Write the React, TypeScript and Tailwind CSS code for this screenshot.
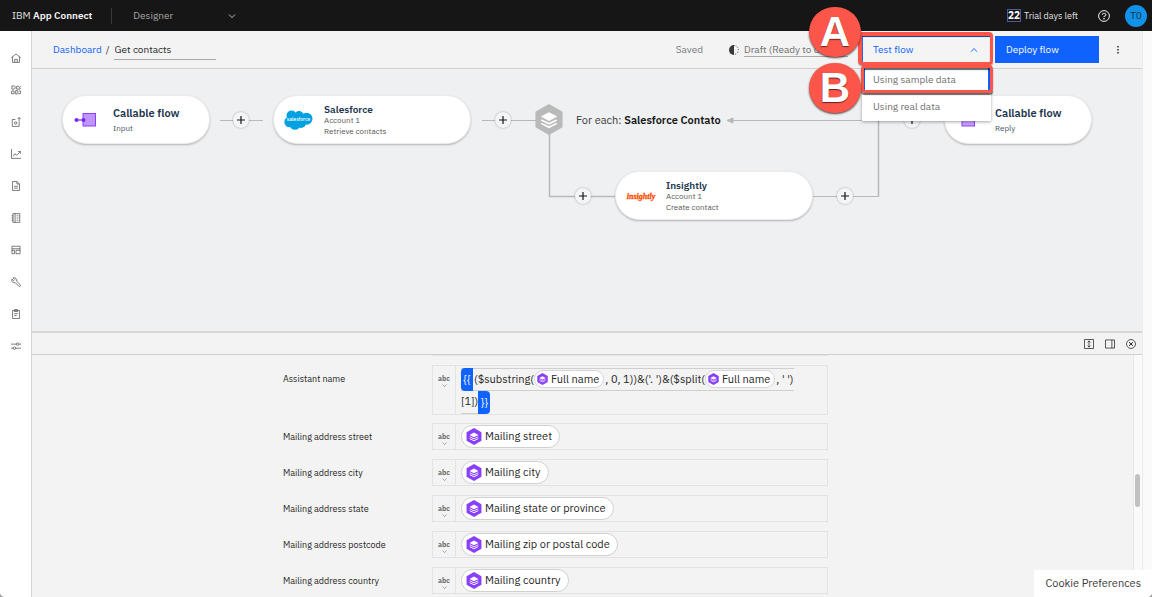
import type { ReactNode } from "react";

const sans = "font-['IBM_Plex_Sans','Roboto','Liberation_Sans',sans-serif]";

function Glyph({ size = 10, children, className = "" }: { size?: number; children: ReactNode; className?: string }) {
  return (
    <svg
      width={size}
      height={size}
      viewBox="0 0 16 16"
      fill="none"
      stroke="currentColor"
      strokeWidth="1.2"
      className={className}
      aria-hidden="true"
    >
      {children}
    </svg>
  );
}

function Chevron({ up = false, size = 8 }: { up?: boolean; size?: number }) {
  return (
    <Glyph size={size}>
      <path d={up ? "M2 11.5 8 5l6 6.5" : "M2 5l6 6.5L14 5"} strokeWidth="1.8" />
    </Glyph>
  );
}

const navItems: { label: string; icon: ReactNode }[] = [
  { label: "Home", icon: <path d="M.5 7.500 8 1.500l7.500 6M2.500 6v9h11V6M6 15v-5h4v5" /> },
  {
    label: "Catalog",
    icon: (
      <path d="M1.500 1.500h4l1 1v3l-1 1h-4zM9 2h3l1.500 2L15.500 2M9 2v4.500h5.500V4M1 9.500h4V14H1zM7.500 9h3.500v3l-1.500 2.500h-2zM13 9.500h2V14h-3.500" />
    ),
  },
  {
    label: "Deploy",
    icon: (
      <>
        <path d="M7 4H2v11h11V7.500M13 7V.8M10.500 3.300 13 .8l2.500 2.500" />
        <circle cx="7.500" cy="9.500" r="2" />
      </>
    ),
  },
  { label: "Metrics", icon: <path d="M.8 0v15H16M3.500 11.500 6 7.500l3 2.500L15 4M11.500 4H15v3.500" /> },
  { label: "Documents", icon: <path d="M2.500.8h7l4 4v10.400h-11zM9.500.8v4h4M5 8.500h6M5 11.500h6" /> },
  { label: "Logs", icon: <path d="M3 1h11v14H3zM6.500 1v14M1 4.500h3M1 8h3M1 11.500h3M9 4.500h3M9 8h3M9 11.500h3" /> },
  { label: "Templates", icon: <path d="M1.500 2h13v4h-13zM1.500 8.500h4V14h-4zM8 8.500h6.500V14H8zM1.500 6v3M14.500 6v3" /> },
  {
    label: "Tools",
    icon: (
      <path d="M9 6.800A4.300 4.300 0 0 0 3.300 1.400L6 4.200 4.200 6 1.400 3.300A4.300 4.300 0 0 0 6.800 9l5.600 5.800a1.700 1.700 0 0 0 2.400-2.400z" />
    ),
  },
  { label: "Tasks", icon: <path d="M2.500 2.500h11V15.200h-11zM5.500 1h5v3h-5zM5 7.500h6M5 10.500h4" /> },
  {
    label: "Settings",
    icon: (
      <>
        <path d="M0 5h8.500M12.500 5H16M0 11.500h3.500M7.500 11.500H16" />
        <circle cx="10.500" cy="5" r="2" />
        <circle cx="5.500" cy="11.500" r="2" />
      </>
    ),
  },
];

function Hexagon({ className, width, height }: { className: string; width: number; height: number }) {
  return (
    <svg width={width} height={height} viewBox="0 0 28 32" className={`shrink-0 ${className}`} aria-hidden="true">
      <path d="M14 0 28 8v16l-14 8L0 24V8z" fill="currentColor" />
      <path d="M14 8.500 22.500 13 14 17.500 5.500 13z" fill="#fff" />
      <path d="M6 16.500 14 20.500l8-4M6 20l8 4 8-4" fill="none" stroke="#fff" strokeWidth="1.700" />
    </svg>
  );
}

function CallableIcon({ reply = false }: { reply?: boolean }) {
  return (
    <svg width="24" height="16" viewBox="0 0 24 16" aria-hidden="true">
      {reply ? (
        <rect x="7" y="1.500" width="12.500" height="12.500" fill="#c7a0fa" stroke="#8a3ffc" />
      ) : (
        <>
          <rect x="10" y="1.500" width="12.500" height="12.500" fill="#bf95fb" stroke="#8a3ffc" />
          <path d="M3 8h8" stroke="#8a3ffc" strokeWidth="1.300" />
          <circle cx="3.500" cy="8" r="2" fill="#7a25f5" />
          <circle cx="10.500" cy="8" r="2" fill="#7a25f5" />
        </>
      )}
    </svg>
  );
}

function SalesforceLogo() {
  return (
    <svg width="29" height="20" viewBox="0 0 29 20" aria-label="salesforce">
      <g fill="#00a1e0">
        <circle cx="7.500" cy="5.500" r="5" />
        <circle cx="15" cy="5.800" r="4.800" />
        <circle cx="22.500" cy="8.800" r="6" />
        <circle cx="5.500" cy="12" r="5.200" />
        <circle cx="11" cy="14.500" r="5.300" />
        <circle cx="17" cy="13" r="5" />
      </g>
      <text x="14.500" y="11" textAnchor="middle" fontSize="5" fontWeight="500" fill="#fff">
        salesforce
      </text>
    </svg>
  );
}

function InsightlyLogo() {
  return (
    <svg width="30" height="16" viewBox="0 0 30 16" aria-label="insightly">
      <text
        x="15"
        y="11"
        textAnchor="middle"
        fontSize="8"
        fontWeight="700"
        fontStyle="italic"
        fill="#ff4a00"
        stroke="#ff4a00"
        strokeWidth=".3"
        fontFamily="Liberation Serif, serif"
      >
        insightly
      </text>
    </svg>
  );
}

function FlowNode({ place, icon, children }: { place: string; icon: ReactNode; children: ReactNode }) {
  return (
    <article
      className={`absolute flex h-[49px] items-center rounded-full border border-[#ececec] bg-white shadow-[0_1px_2px_rgba(0,0,0,0.25)] ${place}`}
    >
      <div className="flex w-[50px] shrink-0 justify-start pl-[10px]">{icon}</div>
      <div className="whitespace-nowrap">{children}</div>
    </article>
  );
}

function CallableText({ detail }: { detail: string }) {
  return (
    <>
      <h3 className="text-[11px] leading-4 font-semibold text-[#21354f]">Callable flow</h3>
      <p className="text-[8px] leading-[14px] text-[#3f5266]">{detail}</p>
    </>
  );
}

function ConnectorText({ name, action }: { name: string; action: string }) {
  return (
    <div className="pt-[2px]">
      <h3 className="text-[10px] leading-[11px] font-semibold text-[#21354f]">{name}</h3>
      <p className="text-[8px] leading-[11px] text-[#565656]">Account 1</p>
      <p className="text-[8px] leading-[11px] text-[#565656]">{action}</p>
    </div>
  );
}

function AddStep({ place }: { place: string }) {
  return (
    <button
      type="button"
      aria-label="Add step"
      className={`absolute flex size-4 items-center justify-center rounded-full bg-[#f4f5f6] text-[#161616] shadow-[0_0_2px_rgba(0,0,0,0.35)] ${place}`}
    >
      <svg width="10" height="10" viewBox="0 0 10 10" stroke="currentColor" strokeWidth="1.200" aria-hidden="true">
        <path d="M5 1v8M1 5h8" />
      </svg>
    </button>
  );
}

function Canvas() {
  return (
    <section aria-label="Flow" className="relative h-[262px] shrink-0 overflow-hidden bg-[#eff0f2]">
      <svg className="absolute top-0 left-0" width="1110" height="262" fill="none" stroke="#b8b8b8" aria-hidden="true">
        <path d="M188 51.500h43M450 51.500h54M781 127.500h66M698 51.500h149M863 51.500h50" />
        <path d="M517.500 60v67.500H583M846.500 127.500v-76" strokeWidth="1.500" />
        <path d="M695 51.500 701 49v5z" fill="#b8b8b8" />
      </svg>
      <FlowNode place="left-[30px] top-[26px] w-[148px]" icon={<CallableIcon />}>
        <CallableText detail="Input" />
      </FlowNode>
      <AddStep place="left-[201px] top-[43px]" />
      <FlowNode place="left-[241px] top-[26px] w-[198px]" icon={<SalesforceLogo />}>
        <ConnectorText name="Salesforce" action="Retrieve contacts" />
      </FlowNode>
      <AddStep place="left-[463px] top-[43px]" />
      <div className="absolute top-[35px] left-[503px] flex items-center gap-[13px] whitespace-nowrap">
        <Hexagon width={28} height={31} className="text-[#b9b9b9]" />
        <p className="text-[11px] leading-4 text-[#393939]">
          For each: <strong className="font-semibold text-[#161616]">Salesforce Contato</strong>
        </p>
      </div>
      <AddStep place="left-[543px] top-[119px]" />
      <FlowNode place="left-[583px] top-[102px] w-[198px]" icon={<InsightlyLogo />}>
        <ConnectorText name="Insightly" action="Create contact" />
      </FlowNode>
      <AddStep place="left-[805px] top-[119px]" />
      <AddStep place="left-[872px] top-[43px]" />
      <FlowNode place="left-[912px] top-[26px] w-[148px]" icon={<CallableIcon reply />}>
        <CallableText detail="Reply" />
      </FlowNode>
    </section>
  );
}

function Marker({ letter, place }: { letter: string; place: string }) {
  return (
    <span
      className={`absolute z-30 flex h-[50px] w-[52px] items-center justify-center rounded-full bg-[#fc5549] font-['Liberation_Sans',sans-serif] text-[42px] leading-none font-bold text-white shadow-[0_1px_2px_rgba(0,0,0,0.7)] [text-shadow:0_1px_1px_rgba(0,0,0,0.6)] ${place}`}
    >
      {letter}
    </span>
  );
}

function TestFlowMenu() {
  return (
    <div className="relative w-[129px]">
      <button
        type="button"
        aria-expanded="true"
        className="flex h-[27px] w-full items-center justify-between border border-[#2f6bf2] bg-[#f4f4f4] pr-3 pl-[10px] text-[10px] text-[#0f62fe]"
      >
        Test flow
        <Chevron up />
      </button>
      <ul className="absolute top-[31px] left-0 z-10 w-full bg-white text-[10px] text-[#6f6f6f] shadow-[0_1px_3px_rgba(0,0,0,0.35)]">
        <li>
          <button type="button" className="flex h-6 w-full items-center border-x-3 border-[#0f62fe] pl-[8px]">
            Using sample data
          </button>
        </li>
        <li>
          <button type="button" className="flex h-[30px] w-full items-center pl-[11px]">
            Using real data
          </button>
        </li>
      </ul>
      <span className="absolute -top-1 -left-1 z-20 h-[33px] w-[135px] rounded-[4px] border-3 border-t-4 border-l-4 border-[#fc5549] shadow-[0_1px_1px_rgba(0,0,0,0.45),inset_0_1px_1px_rgba(0,0,0,0.4)]" />
      <span className="absolute top-[29px] -left-px z-20 h-[28px] w-[132px] rounded-[4px] border-3 border-[#fc5549] shadow-[0_2px_1px_rgba(0,0,0,0.6),inset_0_2px_1px_rgba(0,0,0,0.6)]" />
      <Marker letter="A" place="-top-[29px] -left-[53px]" />
      <Marker letter="B" place="top-[27px] -left-[53px]" />
    </div>
  );
}

function Toolbar() {
  return (
    <div className="flex h-[38px] shrink-0 items-center border-b border-[#d0d0d0] bg-[#f3f3f3] pr-[19px] pl-[21px] text-[10px]">
      <a href="#dashboard" className="text-[#0f62fe]">
        Dashboard
      </a>
      <span className="px-1 text-[#393939]">/</span>
      <input
        aria-label="Flow name"
        defaultValue="Get contacts"
        className="h-5 w-[102px] border-b border-[#a8a8a8] bg-transparent px-px text-[#262626] outline-none"
      />
      <span className="ml-auto text-[#7a7a7a]">Saved</span>
      <svg className="mr-[5px] ml-[26px]" width="10" height="10" viewBox="0 0 10 10" aria-hidden="true">
        <path d="M5 0a5 5 0 0 0 0 10z" fill="#393939" />
        <path d="M5 .6a4.400 4.400 0 0 1 0 8.800" fill="none" stroke="#525252" strokeDasharray="1.300 1.500" />
      </svg>
      <button type="button" className="w-[118px] overflow-hidden text-left whitespace-nowrap text-[#6f6f6f]">
        <span className="border-b border-[#a8a8a8]">Draft (Ready to deploy)</span>
      </button>
      <TestFlowMenu />
      <button type="button" className="ml-1 h-[27px] w-[104px] bg-[#0f62fe] pl-[11px] text-left text-white">
        Deploy flow
      </button>
      <button type="button" aria-label="More options" className="ml-[14px] flex w-[10px] justify-center">
        <svg width="2" height="8" viewBox="0 0 2 8" fill="#393939" aria-hidden="true">
          <path d="M.2 0h1.600v1.600H.2zM.2 3h1.600v1.600H.2zM.2 6h1.600v1.600H.2z" />
        </svg>
      </button>
    </div>
  );
}

function SmallPill({ text }: { text: string }) {
  return (
    <span className="inline-flex h-[18px] items-center gap-[3px] rounded-full border border-[#d6d6d6] bg-white pr-1 pl-[2px]">
      <Hexagon width={11} height={12} className="text-[#8a3ffc]" />
      {text}
    </span>
  );
}

function Pill({ text }: { text: string }) {
  return (
    <span className="flex h-[23px] items-center gap-[3px] rounded-full border border-[#d0d0d0] bg-white pr-[7px] pl-1 text-[11px] text-[#262626]">
      <Hexagon width={16} height={17} className="text-[#8a3ffc]" />
      {text}
    </span>
  );
}

function Field({ label, tall = false, children }: { label: string; tall?: boolean; children: ReactNode }) {
  const id = label.toLowerCase().split(" ").join("-");
  return (
    <div className={`flex ${tall ? "-mb-px" : ""}`}>
      <span id={id} className="w-[149px] shrink-0 pt-[6px] text-[9px] leading-4 text-[#262626]">
        {label}
      </span>
      <div
        role="group"
        aria-labelledby={id}
        className={`flex w-[396px] border border-[#e3e3e3] ${tall ? "h-[50px]" : "h-[27px]"}`}
      >
        <button
          type="button"
          aria-label="Text type"
          className="flex w-[23px] shrink-0 flex-col items-center border-r border-[#e3e3e3] pt-[8px] text-[7px] leading-[9px] font-bold text-[#6f6f6f]"
        >
          abc
          <Chevron size={5} />
        </button>
        <div className="flex min-w-0 items-center pl-[5px]">{children}</div>
      </div>
    </div>
  );
}

const mappings = [
  ["Mailing address street", "Mailing street"],
  ["Mailing address city", "Mailing city"],
  ["Mailing address state", "Mailing state or province"],
  ["Mailing address postcode", "Mailing zip or postal code"],
  ["Mailing address country", "Mailing country"],
];

function Expression() {
  return (
    <div className="pt-px text-[11px] whitespace-nowrap text-[#262626]">
      <div className="flex h-[23px] items-center border-y border-[#cfcfcf]">
        <span className="flex h-[23px] w-3 items-center justify-center rounded-l-sm bg-[#0f62fe] text-white">{"{{"}</span>
        <span className="pl-px">($substring(</span>
        <SmallPill text="Full name" />
        <span className="pl-px">, 0, 1))&amp;(&apos;. &apos;)&amp;($split(</span>
        <SmallPill text="Full name" />
        <span className="pl-px">, &apos; &apos;)</span>
      </div>
      <div className="flex h-[23px] w-fit items-center">
        <span className="flex h-full items-center border-b border-[#cfcfcf]">[1])</span>
        <span className="flex h-[23px] w-3 items-center justify-center rounded-r-sm bg-[#0f62fe] text-white">{"}}"}</span>
      </div>
    </div>
  );
}

function MappingPanel() {
  return (
    <section aria-label="Field mappings" className="flex min-h-0 flex-1 flex-col border-t-2 border-[#d6d6d6] bg-[#f3f3f3]">
      <div className="flex h-[22px] shrink-0 items-center justify-end gap-[11px] border-b border-[#cfcfcf] pr-[6px] text-[#262626]">
        <button type="button" aria-label="Resize panel">
          <Glyph>
            <path d="M.8.8h14.400v14.400H.8zM8 3v10M5.800 5.500 8 3l2.200 2.500M5.800 10.500 8 13l2.200-2.500" />
          </Glyph>
        </button>
        <button type="button" aria-label="Dock panel">
          <Glyph>
            <path d="M.8 1.500h14.400v13H.8zM11 1.500v13" />
          </Glyph>
        </button>
        <button type="button" aria-label="Close panel">
          <Glyph>
            <circle cx="8" cy="8" r="7.200" />
            <path d="m5 5 6 6M11 5l-6 6" strokeWidth="1.600" />
          </Glyph>
        </button>
      </div>
      <div className="flex min-h-0 flex-1">
        <div className="flex min-w-0 flex-1 flex-col gap-[9px] overflow-hidden pl-[251px]">
          <div className="ml-[149px] h-px w-[396px] shrink-0 bg-[#e3e3e3]" />
          <Field label="Assistant name" tall>
            <Expression />
          </Field>
          {mappings.map(([label, value]) => (
            <Field key={label} label={label}>
              <Pill text={value} />
            </Field>
          ))}
        </div>
        <div className="flex w-[9px] shrink-0 justify-center border-l border-[#e8e8e8] bg-[#fafafa] pt-[119px] pr-px">
          <span className="h-[33px] w-[5px] rounded-full bg-[#c1c1c1]" />
        </div>
      </div>
    </section>
  );
}

function Header() {
  return (
    <header className="flex h-[31px] shrink-0 items-center bg-[#161616] text-[10px] text-[#e0e0e0]">
      <p className="pl-3 whitespace-nowrap">
        IBM <strong className="font-semibold text-[#f4f4f4]">App Connect</strong>
      </p>
      <div className="relative ml-[19px] flex h-4 items-center border-l border-[#393939] pl-[21px]">
        <select aria-label="Product area" className="w-[103px] appearance-none bg-transparent text-[#a8a8a8] outline-none">
          <option>Designer</option>
        </select>
        <span className="pointer-events-none absolute right-0 text-[#c6c6c6]">
          <Chevron />
        </span>
      </div>
      <div className="ml-auto flex items-center pr-[5px]">
        <span className="border border-[#4b5a9c] text-[10px] leading-[11px] font-bold text-white">22</span>
        <span className="ml-[3px] text-[9px]">Trial days left</span>
        <button type="button" aria-label="Help" className="ml-[20px]">
          <svg width="12" height="12" viewBox="0 0 16 16" fill="none" stroke="#f4f4f4" strokeWidth="1.300" aria-hidden="true">
            <circle cx="8" cy="8" r="7.200" />
            <path d="M5.800 6.500V6A1.500 1.500 0 0 1 7.300 4.500h1.400a1.500 1.500 0 0 1 0 3.700H8v1.300" />
            <circle cx="8" cy="11.700" r=".5" fill="#f4f4f4" />
          </svg>
        </button>
        <button
          type="button"
          className="ml-[15px] flex size-[22px] items-center justify-center rounded-full bg-[#1192e8] text-[10px] text-[#12304a]"
        >
          T0
        </button>
      </div>
    </header>
  );
}

export default function App() {
  return (
    <div className="h-screen bg-[#9b9b9b]">
      <div className={`relative flex h-full flex-col overflow-hidden rounded-b-[5px] bg-white ${sans}`}>
        <Header />
        <div className="flex min-h-0 flex-1">
          <nav
            aria-label="Main"
            className="flex w-8 shrink-0 flex-col items-center gap-[22px] border-r border-[#d4d4d4] bg-white pt-[22px] text-[#525252]"
          >
            {navItems.map((item) => (
              <a key={item.label} href={`#${item.label.toLowerCase()}`} aria-label={item.label}>
                <Glyph className="block">{item.icon}</Glyph>
              </a>
            ))}
          </nav>
          <main className="flex min-w-0 flex-1 flex-col">
            <Toolbar />
            <Canvas />
            <MappingPanel />
          </main>
          <div className="w-[10px] shrink-0 border-l border-[#ececec] bg-[#fafafa]" />
        </div>
        <button
          type="button"
          className="absolute right-0 bottom-0 z-40 h-[27px] bg-white px-[11px] text-[11px] text-[#393939]"
        >
          Cookie Preferences
        </button>
      </div>
    </div>
  );
}
